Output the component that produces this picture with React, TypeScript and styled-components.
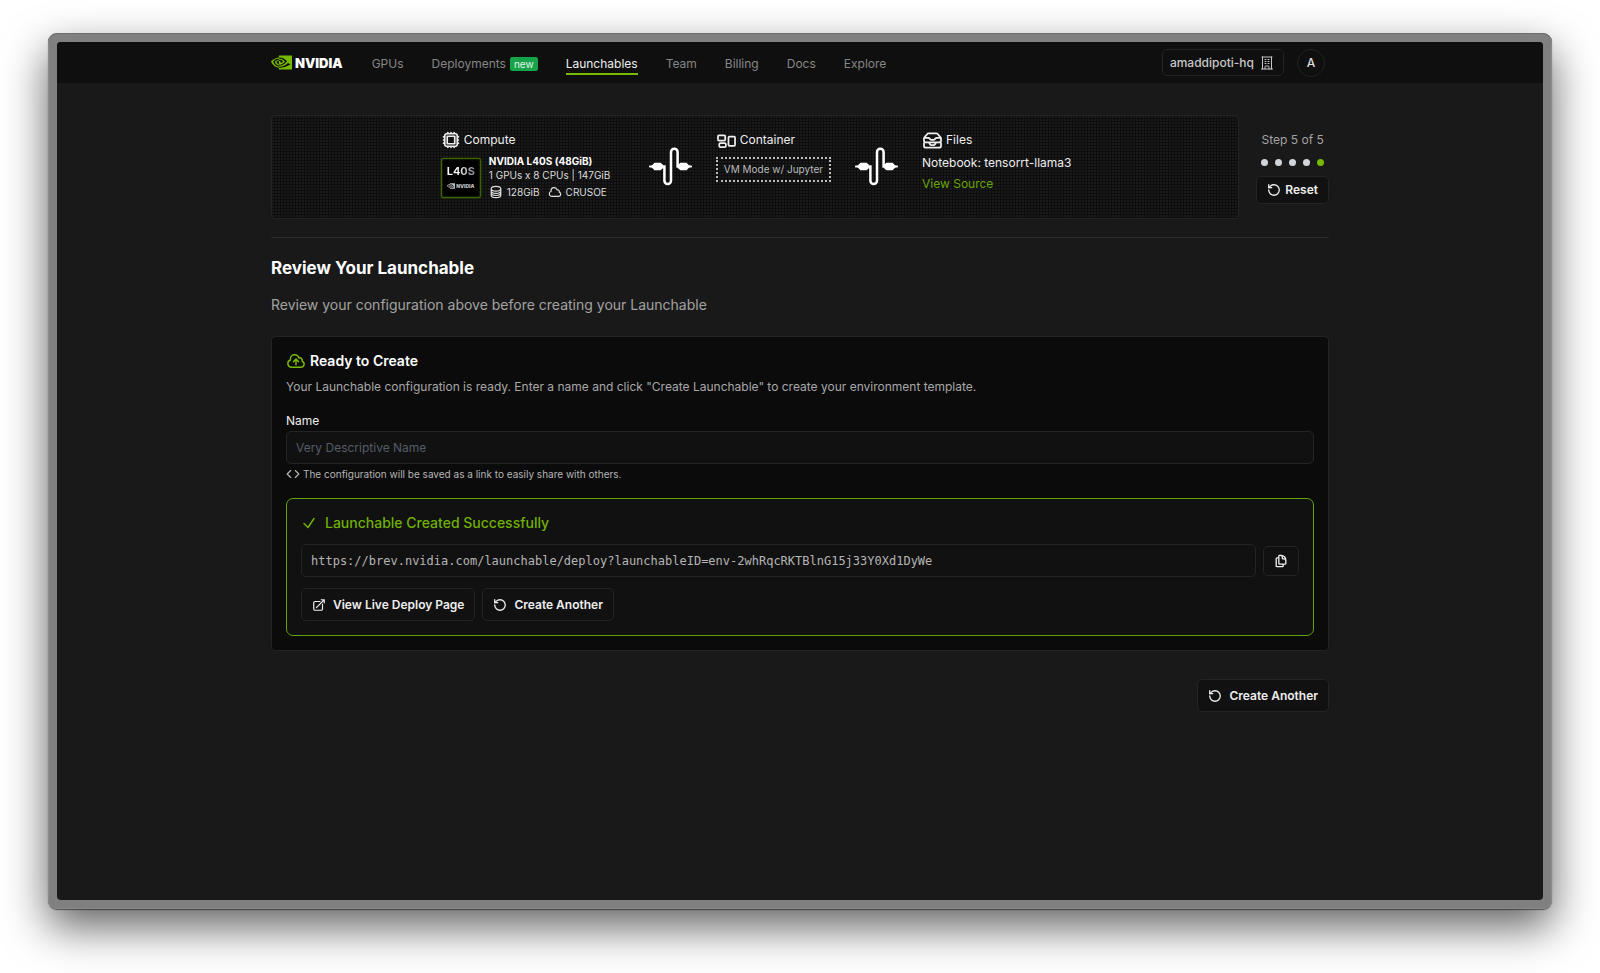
import React from "react";
import styled, { createGlobalStyle } from "styled-components";
import { Code, RotateCcw } from "lucide-react";
import {
  HiOutlineArrowTopRightOnSquare,
  HiOutlineBuildingOffice,
  HiOutlineCheck,
  HiOutlineCircleStack,
  HiOutlineCloud,
  HiOutlineCloudArrowUp,
  HiOutlineCpuChip,
  HiOutlineDocumentDuplicate,
  HiOutlineInboxStack,
  HiOutlineRectangleGroup,
} from "react-icons/hi2";
import { SiNvidia } from "react-icons/si";

const green = "#76b900";
const line = "#242424";

const GlobalStyle = createGlobalStyle`
  *, *::before, *::after { box-sizing: border-box; }
  body {
    margin: 0;
    background: #fff;
    color: #eee;
    font-family: Inter, "Noto Sans", sans-serif;
    font-size: 12px;
    line-height: 18px;
  }
  h1, h2, h3, p { margin: 0; }
  a { color: inherit; text-decoration: none; }
  button, input { font: inherit; color: inherit; }
  svg { flex: none; display: block; }
`;

const Backdrop = styled.div`
  min-height: 100vh;
  padding: 33px 48px 64px;
  display: flex;
`;

const Window = styled.div`
  flex: 1;
  min-width: 0;
  padding: 9px;
  background: #808080;
  border-radius: 9px;
  box-shadow:
    inset 0 1px 0 #6e6e6e,
    inset 0 0 0 1px #8c8c8c,
    0 1px 1px rgba(0, 0, 0, 0.5),
    0 18px 44px rgba(0, 0, 0, 0.62);
  display: flex;
`;

const Screen = styled.div`
  flex: 1;
  min-width: 0;
  background: #191919;
  border-radius: 4px;
  overflow: hidden;
`;

const Container = styled.div`
  max-width: 1058px;
  margin: 0 auto;
`;

const Header = styled.header`
  background: #0f0f0f;
`;

const HeaderRow = styled(Container)`
  height: 41px;
  display: flex;
  align-items: center;
  justify-content: space-between;
`;

const Group = styled.div`
  display: flex;
  align-items: center;
  gap: 29px;
`;

const Brand = styled.a`
  display: flex;
  align-items: center;
  gap: 3px;
  color: #fff;
  font: 900 13px/16px Inter, sans-serif;
  svg { color: ${green}; }
`;

const Nav = styled.nav`
  display: flex;
  gap: 28px;
  padding-top: 4px;
`;

const NavLink = styled.a<{ $active?: boolean }>`
  display: flex;
  align-items: center;
  gap: 4px;
  height: 20px;
  color: ${(p) => (p.$active ? "#eee" : "#868686")};
  border-bottom: 2px solid ${(p) => (p.$active ? green : "transparent")};
`;

const NewBadge = styled.span`
  padding: 0 4px;
  border-radius: 2px;
  background: #16a34a;
  color: #e8f5ec;
  font-size: 10px;
  line-height: 14px;
`;

const Account = styled.div`
  display: flex;
  align-items: center;
  gap: 13px;
  padding-right: 4px;
`;

const OrgButton = styled.button`
  display: flex;
  align-items: center;
  gap: 5px;
  height: 27px;
  padding: 0 8px 0 7px;
  border: 1px solid ${line};
  border-radius: 5px;
  background: #0f0f0f;
  color: #c8c8c8;
  font-weight: 500;
`;

const Avatar = styled.button`
  width: 28px;
  height: 28px;
  padding: 0;
  border: 1px solid ${line};
  border-radius: 50%;
  background: #0f0f0f;
  color: #ddd;
  font-weight: 500;
`;

const Main = styled(Container).attrs({ as: "main" })`
  padding: 32px 0 40px;
`;

const TopRow = styled.section`
  display: flex;
  gap: 17px;
  padding-bottom: 18px;
  border-bottom: 1px solid #2b2b2b;
`;

const Summary = styled.div`
  flex: 1;
  display: flex;
  justify-content: center;
  gap: 24px;
  min-height: 104px;
  padding: 14px 14px 14px 16px;
  border: 1px solid ${line};
  border-radius: 4px;
  background: radial-gradient(circle at 1px 1px, #1a1a1a 1px, transparent 1px) 0 0 / 3px 3px #0d0d0d;
`;

const SummaryColumn = styled.div<{ $min: number }>`
  min-width: ${(p) => p.$min}px;
  display: flex;
  flex-direction: column;
  align-items: flex-start;
`;

const SummaryTitle = styled.h3`
  display: flex;
  align-items: center;
  gap: 3px;
  height: 20px;
  font-size: 12px;
  font-weight: 400;
  color: #eee;
`;

const ComputeBody = styled.div`
  display: flex;
  gap: 8px;
  margin-top: 4px;
`;

const Chip = styled.div`
  align-self: flex-start;
  width: 40px;
  height: 40px;
  margin-top: 4px;
  padding-top: 5px;
  display: flex;
  flex-direction: column;
  align-items: center;
  gap: 4px;
  border: 1px solid #3c6400;
  border-radius: 2px;
  box-shadow: 0 0 2px #3c6400, inset 0 0 2px #3c6400;
  background: #000;
`;

const ChipName = styled.span`
  font: 700 11px/14px Inter, sans-serif;
  background: linear-gradient(90deg, #fff 30%, #888);
  background-clip: text;
  color: transparent;
`;

const ChipBrand = styled.span`
  display: flex;
  align-items: center;
  gap: 1px;
  color: #bbb;
  font: 900 5px/6px Inter, sans-serif;
`;

const Specs = styled.div`
  display: flex;
  flex-direction: column;
  font-size: 10px;
  line-height: 14px;
  color: #ddd;
`;

const SpecName = styled.strong`
  color: #fff;
`;

const SpecRow = styled.span`
  display: flex;
  align-items: center;
  gap: 4px;
  margin-top: 3px;
  svg + span { margin-right: 4px; }
`;

const CableIcon = styled.svg`
  margin-top: 17px;
`;

const ModeBox = styled.div`
  height: 25px;
  margin-top: 7px;
  padding: 0 6px;
  border: 2px dotted #bbb;
  font-size: 10px;
  line-height: 21px;
  color: #bbb;
  white-space: nowrap;
`;

const FileText = styled.p`
  margin-top: 4px;
  line-height: 17px;
`;

const SourceLink = styled.a`
  margin-top: 4px;
  color: #69a500;
  line-height: 17px;
`;

const StepPanel = styled.aside`
  display: flex;
  flex-direction: column;
  align-items: center;
  gap: 10px;
  padding-top: 16px;
`;

const StepText = styled.span`
  color: #a3a3a3;
`;

const Dots = styled.div`
  display: flex;
  gap: 7px;
`;

const Dot = styled.span<{ $current?: boolean }>`
  width: 7px;
  height: 7px;
  border-radius: 50%;
  background: ${(p) => (p.$current ? green : "#d1d5db")};
`;

const Button = styled.button<{ $compact?: boolean }>`
  display: flex;
  align-items: center;
  gap: ${(p) => (p.$compact ? 4 : 7)}px;
  height: ${(p) => (p.$compact ? 28 : 33)}px;
  padding: 0 10px;
  border: 1px solid ${line};
  border-radius: 5px;
  background: #111;
  color: #eee;
  font-weight: 600;
  white-space: nowrap;
`;

const PageTitle = styled.h1`
  margin-top: 18px;
  font-size: 17px;
  line-height: 24px;
  font-weight: 700;
  color: #fff;
`;

const Lead = styled.p`
  margin-top: 15px;
  font-size: 14px;
  line-height: 20px;
  color: #a3a3a3;
`;

const Card = styled.section`
  margin-top: 21px;
  padding: 14px;
  border: 1px solid ${line};
  border-radius: 4px;
  background: #0b0b0b;
`;

const CardTitle = styled.h2`
  display: flex;
  align-items: center;
  gap: 4px;
  font-size: 14px;
  line-height: 20px;
  font-weight: 600;
  color: #fff;
  svg { color: ${green}; }
`;

const CardText = styled.p`
  margin-top: 7px;
  color: #a8a8a8;
`;

const Label = styled.label`
  display: block;
  margin-top: 16px;
`;

const TextInput = styled.input<{ $mono?: boolean }>`
  flex: 1;
  width: 100%;
  min-width: 0;
  height: 33px;
  padding: 0 9px;
  border: 1px solid ${line};
  border-radius: 5px;
  background: #111;
  color: ${(p) => (p.$mono ? "#b5b5b5" : "#eee")};
  font-family: ${(p) => (p.$mono ? '"DejaVu Sans Mono", monospace' : "inherit")};
  &::placeholder { color: #555b68; opacity: 1; }
`;

const NameField = styled.div`
  display: flex;
  margin-top: 1px;
`;

const Note = styled.p`
  display: flex;
  align-items: center;
  gap: 3px;
  margin-top: 3px;
  font-size: 10px;
  line-height: 14px;
  color: #b5b5b5;
`;

const Success = styled.div`
  margin-top: 17px;
  padding: 14px;
  border: 1px solid #67a100;
  border-radius: 7px;
  background: #111;
`;

const SuccessTitle = styled.h3`
  display: flex;
  align-items: center;
  gap: 8px;
  font-size: 14px;
  line-height: 20px;
  font-weight: 500;
  color: #70b000;
`;

const UrlRow = styled.div`
  display: flex;
  align-items: center;
  gap: 7px;
  margin-top: 11px;
`;

const CopyButton = styled(Button)`
  width: 36px;
  height: 30px;
  padding: 0;
  justify-content: center;
`;

const Actions = styled.div<{ $end?: boolean }>`
  display: flex;
  justify-content: ${(p) => (p.$end ? "flex-end" : "flex-start")};
  gap: 7px;
  margin-top: ${(p) => (p.$end ? 28 : 11)}px;
`;

const Cable = () => (
  <CableIcon width="43" height="39" viewBox="0 0 43 39" aria-hidden="true">
    <path
      d="M13 19.5h2.4v14.2a3.3 3.3 0 0 0 6.6 0V5a3.3 3.3 0 0 1 6.6 0v14.5H31"
      fill="none"
      stroke="#fff"
      strokeWidth="2.5"
    />
    <path d="M0 18.8 3 18.3 5.5 15.7h6L13.8 17.5v4L11.5 23.3h-6L3 20.7 0 20.2z" fill="#fff" />
    <path d="M43 18.8 40 18.3 37.5 15.7h-6L29.2 17.5v4l2.3 1.8h6l2.5-2.6 3-.5z" fill="#fff" />
  </CableIcon>
);

const steps = [1, 2, 3, 4, 5];
const currentStep = 5;

export default function App() {
  return (
    <>
      <GlobalStyle />
      <Backdrop>
        <Window>
          <Screen>
            <Header>
              <HeaderRow>
                <Group>
                  <Brand href="#">
                    <SiNvidia size={21} />
                    <span>NVIDIA</span>
                  </Brand>
                  <Nav>
                    <NavLink href="#">GPUs</NavLink>
                    <NavLink href="#">
                      Deployments <NewBadge>new</NewBadge>
                    </NavLink>
                    <NavLink href="#" $active>Launchables</NavLink>
                    <NavLink href="#">Team</NavLink>
                    <NavLink href="#">Billing</NavLink>
                    <NavLink href="#">Docs</NavLink>
                    <NavLink href="#">Explore</NavLink>
                  </Nav>
                </Group>
                <Account>
                  <OrgButton>
                    amaddipoti-hq <HiOutlineBuildingOffice size={16} />
                  </OrgButton>
                  <Avatar>A</Avatar>
                </Account>
              </HeaderRow>
            </Header>

            <Main>
              <TopRow>
                <Summary>
                  <SummaryColumn $min={184}>
                    <SummaryTitle>
                      <HiOutlineCpuChip size={20} strokeWidth={2} />
                      Compute
                    </SummaryTitle>
                    <ComputeBody>
                      <Chip>
                        <ChipName>L40S</ChipName>
                        <ChipBrand>
                          <SiNvidia size={8} />
                          NVIDIA
                        </ChipBrand>
                      </Chip>
                      <Specs>
                        <SpecName>NVIDIA L40S (48GiB)</SpecName>
                        <span>1 GPUs x 8 CPUs | 147GiB</span>
                        <SpecRow>
                          <HiOutlineCircleStack size={14} strokeWidth={2} />
                          <span>128GiB</span>
                          <HiOutlineCloud size={14} strokeWidth={2} />
                          <span>CRUSOE</span>
                        </SpecRow>
                      </Specs>
                    </ComputeBody>
                  </SummaryColumn>
                  <Cable />
                  <SummaryColumn $min={114}>
                    <SummaryTitle>
                      <HiOutlineRectangleGroup size={21} strokeWidth={2} />
                      Container
                    </SummaryTitle>
                    <ModeBox>VM Mode w/ Jupyter</ModeBox>
                  </SummaryColumn>
                  <Cable />
                  <SummaryColumn $min={148}>
                    <SummaryTitle>
                      <HiOutlineInboxStack size={21} strokeWidth={2} />
                      Files
                    </SummaryTitle>
                    <FileText>Notebook: tensorrt-llama3</FileText>
                    <SourceLink href="#">View Source</SourceLink>
                  </SummaryColumn>
                </Summary>
                <StepPanel>
                  <StepText>Step 5 of 5</StepText>
                  <Dots>
                    {steps.map((s) => (
                      <Dot key={s} $current={s === currentStep} />
                    ))}
                  </Dots>
                  <Button $compact>
                    <RotateCcw size={14} strokeWidth={2.25} />
                    Reset
                  </Button>
                </StepPanel>
              </TopRow>

              <PageTitle>Review Your Launchable</PageTitle>
              <Lead>Review your configuration above before creating your Launchable</Lead>

              <Card>
                <CardTitle>
                  <HiOutlineCloudArrowUp size={20} strokeWidth={1.75} />
                  Ready to Create
                </CardTitle>
                <CardText>
                  Your Launchable configuration is ready. Enter a name and click "Create Launchable" to create your
                  environment template.
                </CardText>
                <Label htmlFor="name">Name</Label>
                <NameField>
                  <TextInput id="name" placeholder="Very Descriptive Name" />
                </NameField>
                <Note>
                  <Code size={14} />
                  The configuration will be saved as a link to easily share with others.
                </Note>

                <Success>
                  <SuccessTitle>
                    <HiOutlineCheck size={16} strokeWidth={2.25} />
                    Launchable Created Successfully
                  </SuccessTitle>
                  <UrlRow>
                    <TextInput
                      $mono
                      readOnly
                      aria-label="Launchable link"
                      value="https://brev.nvidia.com/launchable/deploy?launchableID=env-2whRqcRKTBlnG15j33Y0Xd1DyWe"
                    />
                    <CopyButton aria-label="Copy link">
                      <HiOutlineDocumentDuplicate size={14} strokeWidth={2.25} />
                    </CopyButton>
                  </UrlRow>
                  <Actions>
                    <Button>
                      <HiOutlineArrowTopRightOnSquare size={14} strokeWidth={2} />
                      View Live Deploy Page
                    </Button>
                    <Button>
                      <RotateCcw size={14} strokeWidth={2.25} />
                      Create Another
                    </Button>
                  </Actions>
                </Success>
              </Card>

              <Actions $end>
                <Button>
                  <RotateCcw size={14} strokeWidth={2.25} />
                  Create Another
                </Button>
              </Actions>
            </Main>
          </Screen>
        </Window>
      </Backdrop>
    </>
  );
}
